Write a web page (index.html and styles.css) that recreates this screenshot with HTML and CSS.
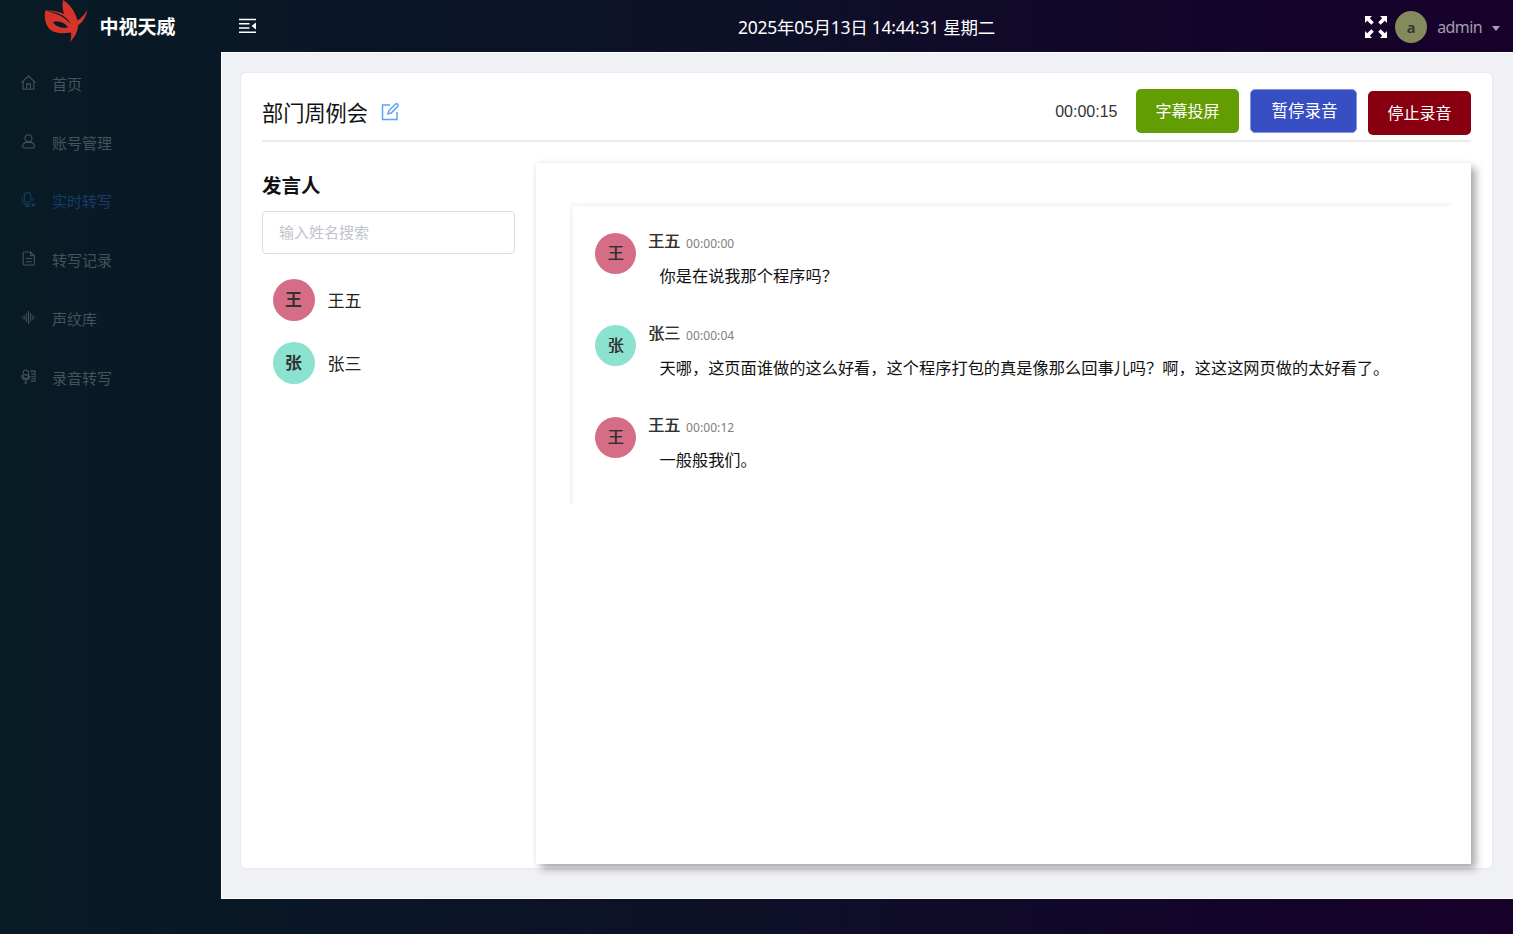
FILE: index.html
```html
<!DOCTYPE html>
<html lang="zh-CN">
<head>
<meta charset="utf-8">
<title>中视天威</title>
<link rel="stylesheet" href="styles.css">
</head>
<body>
<div class="app">
  <aside class="sidebar">
    <div class="brand">
      <svg class="brand-logo" width="46" height="44" viewBox="0 0 46 44"><path fill="#d6342b" fill-rule="evenodd" d="M2.300 10.500C10 10.300 16 11.500 21 14C19.500 9 19 4 20 0C27 4.500 32 11 34.500 20.500C38 18.500 41.500 15 44.400 9.500C43 17 40 22 35 25.500C35 31 32 37 27 42C28 38.500 28.500 35.500 28 32.500C20 34 11 33.500 6.500 29C2 24 1 17 2.300 10.500ZM3.500 11.300C13 13 22 17 27.500 24C25 17.500 16 11.500 3.500 11.300ZM10 22C12 26.500 19 28.500 25 27.500C22 22.500 16 20.500 10 22Z"/></svg>
      <span class="brand-name">中视天威</span>
    </div>
    <nav class="menu">
      <a class="menu-item"><svg class="menu-icon" viewBox="0 0 14 14"><path d="M.5 7.200 7 1l6.500 6.200M2 6v7.300h10V6M5.300 13V8.300h3.400V13"/></svg><span>首页</span></a>
      <a class="menu-item"><svg class="menu-icon" viewBox="0 0 14 14"><circle cx="7" cy="3.900" r="3.200"/><path d="M1.500 11.500c0-2 1.500-3.400 3.400-3.700h4.200c1.900.3 3.400 1.700 3.400 3.700 0 1-.5 1.600-1.400 1.600H2.900c-.9 0-1.400-.6-1.400-1.600Z"/></svg><span>账号管理</span></a>
      <a class="menu-item active"><svg class="menu-icon" viewBox="0 0 14 14"><rect x="3.200" y=".6" width="6" height="9" rx="3"/><path d="M1 6c0 3.800 2 5.600 5.200 5.600 1.200 0 2-.2 2.800-.7M1 5.500h1M11.300 5.500v3M6.200 11.600v1.700M3.800 13.400h4.800M10 10.500l3 3M13 10.500l-3 3"/></svg><span>实时转写</span></a>
      <a class="menu-item"><svg class="menu-icon" viewBox="0 0 14 14"><path d="M3 1h6l3.500 3.500V12q0 1-1 1H3q-1 0-1-1V2q0-1 1-1ZM9 1v3.500h3.500M4.500 7h5.500M4.500 10h5.500"/></svg><span>转写记录</span></a>
      <a class="menu-item"><svg class="menu-icon" viewBox="0 0 14 14"><path d="M.8 6.500v1M2.900 5v4M5 3v8M7 .8v12.400M9 3v8M11.100 5v4M13.200 6.500v1"/></svg><span>声纹库</span></a>
      <a class="menu-item"><svg class="menu-icon" viewBox="0 0 14 14"><rect x="2" y="1" width="5" height="8" rx="2.500"/><path d="M.5 5.500c0 3.500 1.500 4.800 4 4.800s3.500-1.200 3.500-4M2 5.500h5M4.500 10.300V13M3 13h3M8.500 2H13v9.500H8.800M9.500 4.800H12M9.500 7H12M9.500 9.200H12"/></svg><span>录音转写</span></a>
    </nav>
  </aside>

  <div class="content">
    <header class="topbar">
      <svg class="fold" width="18" height="16" viewBox="0 0 18 16"><path d="M0 1.500h17M0 5.800h10.500M0 10h10.500M0 14.300h17" stroke="#fff" stroke-width="1.600"/><path d="M17 4.500v7L12.500 8Z" fill="#fff"/></svg>
      <div class="clock">2025年05月13日 14:44:31 星期二</div>
      <div class="user">
        <svg class="expand" width="22" height="22" viewBox="0 0 22 22" fill="#fff"><g id="arrow"><path d="M0 0h7L4.800 2.200 8.800 6.300 6.300 8.800 2.200 4.800 0 7Z"/></g><use href="#arrow" transform="matrix(-1 0 0 1 22 0)"/><use href="#arrow" transform="matrix(1 0 0 -1 0 22)"/><use href="#arrow" transform="matrix(-1 0 0 -1 22 22)"/></svg>
        <span class="user-avatar">a</span>
        <span class="user-name">admin</span>
        <span class="caret"></span>
      </div>
    </header>

    <main class="page">
      <section class="card">
        <div class="card-head">
          <h1 class="title">部门周例会</h1>
          <svg class="edit" width="18" height="18" viewBox="0 0 18 18"><path d="M9 2H1.500v14.500H16V9M7 11l.8-3.200L14.500 1q1-.7 2 .3t.3 2L10.200 10Z"/></svg>
          <span class="timer">00:00:15</span>
          <button class="btn green">字幕投屏</button>
          <button class="btn blue">暂停录音</button>
          <button class="btn red">停止录音</button>
        </div>
        <div class="card-body">
          <div class="speakers">
            <h2 class="speakers-title">发言人</h2>
            <input class="search" placeholder="输入姓名搜索">
            <div class="speaker"><span class="avatar rose">王</span><span class="speaker-name">王五</span></div>
            <div class="speaker"><span class="avatar mint">张</span><span class="speaker-name">张三</span></div>
          </div>
          <div class="transcript">
            <div class="scroll">
              <div class="messages">
                <article class="message">
                  <span class="avatar small rose">王</span>
                  <div class="message-main">
                    <div class="meta"><span class="name">王五</span><time>00:00:00</time></div>
                    <p class="text">你是在说我那个程序吗？</p>
                  </div>
                </article>
                <article class="message">
                  <span class="avatar small mint">张</span>
                  <div class="message-main">
                    <div class="meta"><span class="name">张三</span><time>00:00:04</time></div>
                    <p class="text">天哪，这页面谁做的这么好看，这个程序打包的真是像那么回事儿吗？啊，这这这网页做的太好看了。</p>
                  </div>
                </article>
                <article class="message">
                  <span class="avatar small rose">王</span>
                  <div class="message-main">
                    <div class="meta"><span class="name">王五</span><time>00:00:12</time></div>
                    <p class="text">一般般我们。</p>
                  </div>
                </article>
              </div>
            </div>
          </div>
        </div>
      </section>
    </main>
  </div>
</div>
</body>
</html>
```

FILE: styles.css
```css
* { box-sizing: border-box; }
body {
  margin: 0;
  font-family: "Noto Sans", "Noto Sans CJK SC", sans-serif;
  overflow: hidden;
}
h1, h2, p { margin: 0; }
.app {
  display: flex;
  width: 1513px;
  height: 934px;
  background: linear-gradient(90deg, #081c25 0%, #091727 17%, #0e1028 50%, #13052a 80%, #17012a 100%);
}

/* Sidebar */
.sidebar { width: 220.500px; flex: none; }
.brand { display: flex; height: 54px; padding-left: 43px; }
.brand-logo { flex: none; }
.brand-name {
  margin-left: 10.500px;
  font-size: 19px;
  line-height: 54px;
  font-weight: 700;
  color: #fff;
}
.menu { display: flex; flex-direction: column; }
.menu-item {
  display: flex;
  align-items: center;
  height: 58.800px;
  padding-left: 21px;
  gap: 16px;
  font-size: 15px;
  color: #47525a;
}
.menu-item.active { color: #193b66; }
.menu-icon {
  width: 15px;
  height: 15px;
  margin-top: -2px;
  fill: none;
  stroke: currentColor;
  stroke-width: 1;
}

/* Top bar */
.content { flex: 1; min-width: 0; }
.topbar {
  display: grid;
  grid-template-columns: 517.500px 1fr auto;
  align-items: center;
  height: 52px;
}
.fold { margin-left: 18px; }
.clock {
  font-size: 17.500px;
  letter-spacing: -.28px;
  color: #fff;
  white-space: nowrap;
}
.user { display: flex; align-items: center; padding: 2px 13px 0 0; }
.user-avatar {
  width: 32px;
  height: 32px;
  margin-left: 8px;
  border-radius: 50%;
  background: #848a5b;
  color: #333;
  font-size: 15px;
  font-weight: 600;
  line-height: 32px;
  text-align: center;
}
.user-name { margin: 0 10px; font-size: 16px; letter-spacing: -.6px; color: #a49caf; }
.caret {
  margin-top: 3px;
  border: 4px solid transparent;
  border-top: 5px solid #aaa3b3;
  border-bottom: 0;
}

/* Page */
.page {
  height: 847px;
  padding: 20px 21px 30px 19.500px;
  background: #f0f1f5;
  border: solid #fff;
  border-width: 1px 0 1px 1px;
}
.card {
  height: 795px;
  padding: 0 21px;
  border-radius: 5px;
  background: #fff;
  box-shadow: 0 0 3px rgba(0, 0, 0, .08);
}
.card-head {
  display: flex;
  align-items: center;
  height: 69px;
  padding-top: 12px;
  border-bottom: 2px solid #ebebec;
}
.title { font-size: 21.200px; line-height: 30px; font-weight: 400; color: #111; }
.edit {
  margin-left: 13px;
  margin-top: -1px;
  fill: none;
  stroke: #5ba3f8;
  stroke-width: 1.500;
}
.timer {
  margin: -2px 18.500px 0 auto;
  font: 16px "Liberation Sans", Arial, sans-serif;
  color: #333;
}
.btn {
  width: 103px;
  height: 44px;
  padding: 0 0 1px;
  border: 0;
  border-radius: 5px;
  color: #fff;
  font: 16px "Noto Sans CJK SC", sans-serif;
}
.green { margin: -4px 11px 0 0; background: #629d04; }
.blue { width: 107px; margin: -3px 11px 0 0; padding: 0 0 2px 2px; background: #374fc2; border: 1px solid #8292dc; font-size: 16.500px; }
.red { background: #88000f; }

.card-body { display: flex; height: 722px; padding-top: 21px; }
.speakers { width: 274px; flex: none; }
.speakers-title { margin-top: 7px; font-size: 19.500px; line-height: 32px; font-weight: 700; color: #111; }
.search {
  display: block;
  width: 253px;
  height: 43px;
  margin: 9px 0 25px;
  padding: 0 15px 2px 16px;
  border: 1px solid #dcdee5;
  border-radius: 4px;
  background: #fff;
  font: 15px "Noto Sans CJK SC", sans-serif;
}
.search::placeholder { color: #c0c4cc; }
.speaker {
  display: flex;
  align-items: center;
  height: 42px;
  margin: 0 0 21px 10.500px;
  gap: 13px;
  font-size: 17px;
  color: #222;
}
.speaker-name { margin-top: -2px; }
.avatar {
  flex: none;
  width: 42px;
  height: 42px;
  border-radius: 50%;
  font-size: 17px;
  line-height: 42px;
  font-weight: 700;
  text-align: center;
  color: #333;
}
.rose { background: #d56d87; }
.mint { background: #8ae2cf; }

/* Transcript */
.transcript {
  flex: 1;
  min-width: 0;
  height: 701px;
  padding: 39px 18px 0 33px;
  background: #fff;
  box-shadow: 5px 5px 8px rgba(0, 0, 0, .32), 0 0 6px rgba(0, 0, 0, .07);
}
.scroll { height: 302px; padding: 4px 0 0 4px; overflow: hidden; }
.messages {
  height: 310px;
  padding: 27px 22px 0;
  background: #fff;
  box-shadow: 0 0 8px rgba(0, 0, 0, .1);
}
.message { display: flex; height: 92px; }
.avatar.small {
  width: 41px;
  height: 41px;
  font-size: 16px;
  font-weight: 400;
  line-height: 41px;
  text-shadow: .6px 0 #333;
}
.message-main { margin-left: 12px; }
.meta { display: flex; align-items: center; height: 18px; gap: 6px; color: #333; }
.name { margin-top: -2px; font-size: 16px; line-height: 18px; text-shadow: .6px 0 #333; }
time { padding-top: 2px; font-size: 12px; color: #808080; letter-spacing: .08px; }
.text {
  margin: 12.500px 0 0 11.500px;
  font-size: 16.230px;
  line-height: 24px;
  color: #111;
  white-space: nowrap;
}
```
